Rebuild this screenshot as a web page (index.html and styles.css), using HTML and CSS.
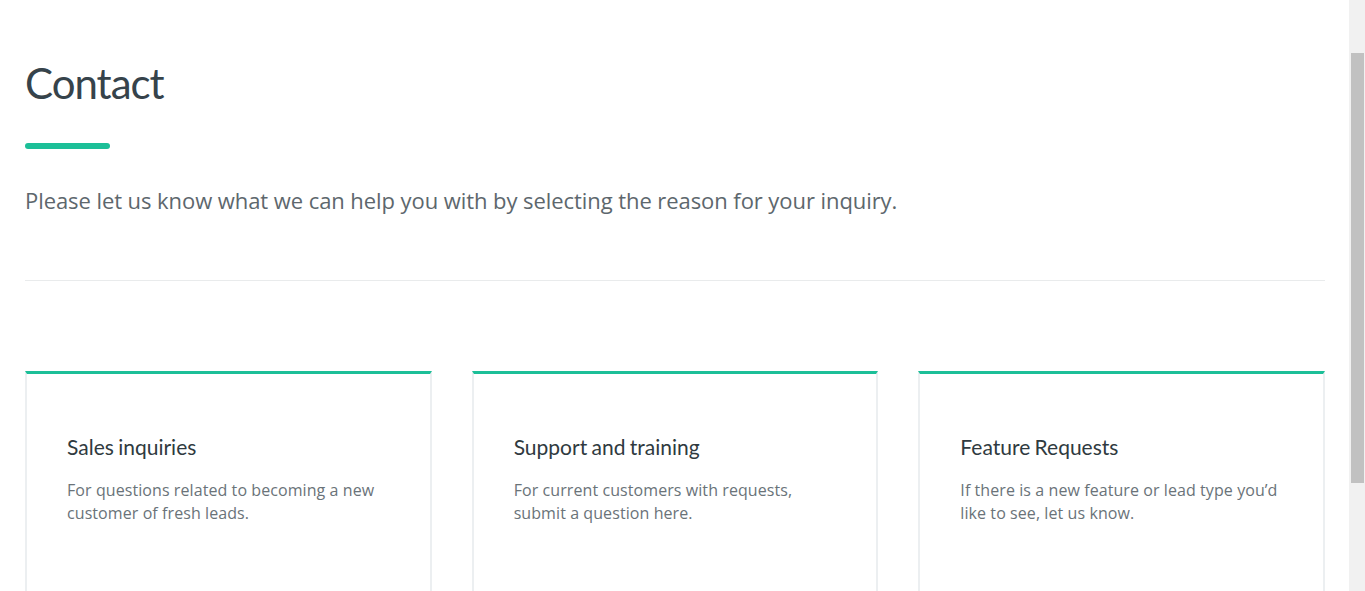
FILE: index.html
```
<!DOCTYPE html>
<html lang="en">
<head>
<meta charset="utf-8">
<title>Contact</title>
<link rel="stylesheet" href="styles.css">
</head>
<body>
<div class="window">
  <main class="page">
    <header class="intro">
      <h1 class="title">Contact</h1>
      <div class="accent"></div>
      <p class="lead">Please let us know what we can help you with by selecting the reason for your inquiry.</p>
    </header>
    <hr class="divider">
    <section class="cards">
      <article class="card">
        <h2 class="card-title">Sales inquiries</h2>
        <p class="card-text">For questions related to becoming a new customer of fresh leads.</p>
      </article>
      <article class="card">
        <h2 class="card-title">Support and training</h2>
        <p class="card-text">For current customers with requests, submit a question here.</p>
      </article>
      <article class="card">
        <h2 class="card-title">Feature Requests</h2>
        <p class="card-text">If there is a new feature or lead type you’d like to see, let us know.</p>
      </article>
    </section>
  </main>
  <div class="scroll-rail" aria-hidden="true">
    <div class="scroll-thumb"></div>
  </div>
</div>
</body>
</html>
```
FILE: styles.css
```
html, body {
  margin: 0;
  padding: 0;
  height: 100%;
  overflow: hidden;
  background: #ffffff;
}

.window {
  display: flex;
  height: 100%;
}

.page {
  flex: 1;
  min-width: 0;
  padding: 58px 24px 40px 25px;
  font-family: "Open Sans", "Liberation Sans", sans-serif;
}

.scroll-rail {
  flex: 0 0 16px;
  background: #f1f1f1;
  display: flex;
  flex-direction: column;
  padding: 53px 1px 0 2px;
  box-sizing: border-box;
}

.scroll-thumb {
  height: 430px;
  background: #c1c1c1;
}

.title {
  margin: 0;
  font-family: Lato, "Liberation Sans", sans-serif;
  font-weight: 400;
  font-size: 42px;
  line-height: 50px;
  color: #36434b;
  letter-spacing: -1px;
}

.accent {
  margin-top: 35px;
  width: 85px;
  height: 6px;
  border-radius: 3px;
  background: #1cbf98;
}

.lead {
  margin: 36px 0 0;
  font-size: 22px;
  line-height: 30px;
  color: #5d676d;
  letter-spacing: -0.07px;
}

.divider {
  margin: 65px 0 0;
  border: 0;
  border-top: 1px solid #e9ebec;
  height: 0;
}

.cards {
  margin-top: 90px;
  display: grid;
  grid-template-columns: repeat(3, 1fr);
  gap: 40px;
}

.card {
  box-sizing: border-box;
  min-height: 328px;
  border: 2px solid #eceff1;
  border-top: 3px solid #1cbf98;
  padding: 61px 40px 40px;
}

.card-title {
  margin: 0;
  font-family: Lato, "Liberation Sans", sans-serif;
  font-weight: 400;
  font-size: 21px;
  line-height: 24px;
  color: #2f3a40;
  word-spacing: -1px;
}

.card-text {
  margin: 20px 0 0;
  font-size: 16px;
  line-height: 23px;
  color: #6a7379;
  letter-spacing: 0.08px;
}
```
